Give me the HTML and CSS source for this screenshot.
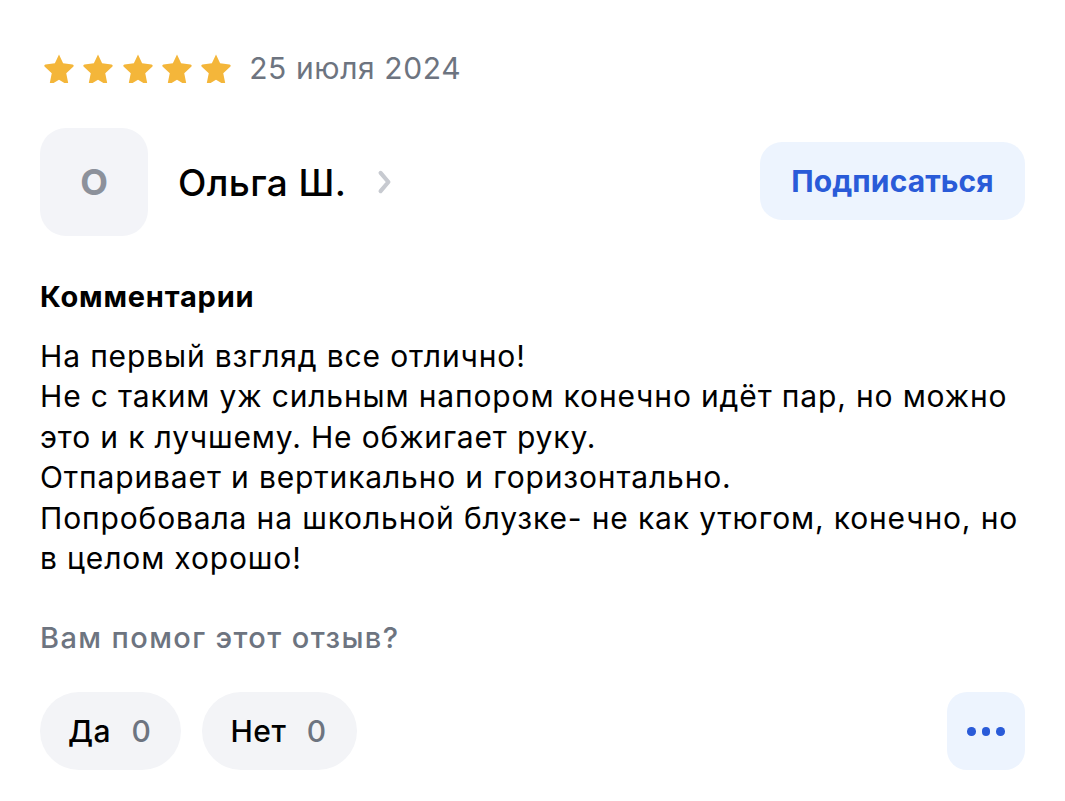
FILE: index.html
```
<!DOCTYPE html>
<html lang="ru">
<head>
    <meta charset="UTF-8">
    <meta name="viewport" content="width=device-width, initial-scale=1.0">
    <title>Отзыв</title>
    <link rel="stylesheet" href="styles.css">
</head>
<body>
    <div class="review">
        <div class="rating">
            <div class="stars">
                <svg class="star" viewBox="1.5 1.8 21 20.4"><path d="M12 2.2l2.9 6.1 6.6.8c.8.1 1.1 1.1.5 1.6l-4.9 4.6 1.3 6.6c.2.8-.7 1.4-1.4 1l-5-2.9-5 2.9c-.7.4-1.6-.2-1.4-1l1.3-6.6-4.9-4.6c-.6-.5-.3-1.5.5-1.6l6.6-.8z"/></svg>
                <svg class="star" viewBox="1.5 1.8 21 20.4"><path d="M12 2.2l2.9 6.1 6.6.8c.8.1 1.1 1.1.5 1.6l-4.9 4.6 1.3 6.6c.2.8-.7 1.4-1.4 1l-5-2.9-5 2.9c-.7.4-1.6-.2-1.4-1l1.3-6.6-4.9-4.6c-.6-.5-.3-1.5.5-1.6l6.6-.8z"/></svg>
                <svg class="star" viewBox="1.5 1.8 21 20.4"><path d="M12 2.2l2.9 6.1 6.6.8c.8.1 1.1 1.1.5 1.6l-4.9 4.6 1.3 6.6c.2.8-.7 1.4-1.4 1l-5-2.9-5 2.9c-.7.4-1.6-.2-1.4-1l1.3-6.6-4.9-4.6c-.6-.5-.3-1.5.5-1.6l6.6-.8z"/></svg>
                <svg class="star" viewBox="1.5 1.8 21 20.4"><path d="M12 2.2l2.9 6.1 6.6.8c.8.1 1.1 1.1.5 1.6l-4.9 4.6 1.3 6.6c.2.8-.7 1.4-1.4 1l-5-2.9-5 2.9c-.7.4-1.6-.2-1.4-1l1.3-6.6-4.9-4.6c-.6-.5-.3-1.5.5-1.6l6.6-.8z"/></svg>
                <svg class="star" viewBox="1.5 1.8 21 20.4"><path d="M12 2.2l2.9 6.1 6.6.8c.8.1 1.1 1.1.5 1.6l-4.9 4.6 1.3 6.6c.2.8-.7 1.4-1.4 1l-5-2.9-5 2.9c-.7.4-1.6-.2-1.4-1l1.3-6.6-4.9-4.6c-.6-.5-.3-1.5.5-1.6l6.6-.8z"/></svg>
            </div>
            <span class="date">25 июля 2024</span>
        </div>

        <div class="author">
            <div class="author-info">
                <div class="avatar">О</div>
                <span class="name">Ольга Ш.</span>
                <svg class="chevron" viewBox="0 0 12 20"><path d="M3 3l6 7-6 7"/></svg>
            </div>
            <button class="subscribe">Подписаться</button>
        </div>

        <h2 class="title">Комментарии</h2>
        <p class="text">На первый взгляд все отлично!<br>
            Не с таким уж сильным напором конечно идёт пар, но можно<br>
            это и к лучшему. Не обжигает руку.<br>
            Отпаривает и вертикально и горизонтально.<br>
            Попробовала на школьной блузке- не как утюгом, конечно, но<br>
            в целом хорошо!</p>

        <div class="question">Вам помог этот отзыв?</div>

        <div class="actions">
            <div class="votes">
                <button class="vote">Да <span class="count">0</span></button>
                <button class="vote">Нет <span class="count">0</span></button>
            </div>
            <button class="more">
                <span class="dot"></span><span class="dot"></span><span class="dot"></span>
            </button>
        </div>
    </div>
</body>
</html>
```
FILE: styles.css
```
body{
    margin: 0;
    padding: 0;
    background-color: #ffffff;
    font-family: "Inter", "Noto Sans", sans-serif;
    color: #000000;
}

.review{
    padding: 53px 40px 0 40px;
}

.rating{
    display: flex;
    align-items: center;
    height: 30px;
}
.stars{
    display: flex;
    gap: 9.3px;
    margin-left: 4px;
}
.star{
    width: 30px;
    height: 29px;
    fill: #f4b63a;
}
.date{
    margin-left: 18px;
    font-size: 30px;
    letter-spacing: 0.6px;
    color: #6d7480;
}

.author{
    margin-top: 45px;
    display: flex;
    align-items: center;
    justify-content: space-between;
}
.author-info{
    display: flex;
    align-items: center;
}
.avatar{
    width: 108px;
    height: 108px;
    border-radius: 26px;
    background-color: #f3f4f8;
    display: flex;
    justify-content: center;
    align-items: center;
    font-size: 36px;
    font-weight: 700;
    color: #8c919b;
}
.name{
    margin-left: 30px;
    font-size: 37px;
    font-weight: 500;
    letter-spacing: 0.4px;
}
.chevron{
    margin-left: 30px;
    width: 17px;
    height: 26px;
    fill: none;
    stroke: #c7cad0;
    stroke-width: 3.2;
    stroke-linecap: round;
    stroke-linejoin: round;
}
.subscribe{
    width: 265px;
    height: 78px;
    margin-top: -2px;
    border: none;
    border-radius: 22px;
    background-color: #edf4fe;
    color: #2a5bd8;
    font-family: inherit;
    font-size: 30px;
    font-weight: 700;
    letter-spacing: 0.1px;
}

.title{
    margin: 41px 0 0 0;
    font-size: 29px;
    line-height: 40px;
    font-weight: 700;
    letter-spacing: 0.8px;
}
.text{
    margin: 19px 0 0 0;
    font-size: 30px;
    line-height: 40.4px;
    letter-spacing: 0.85px;
    white-space: nowrap;
}

.question{
    margin-top: 40px;
    font-size: 29px;
    line-height: 40px;
    font-weight: 500;
    letter-spacing: 1.4px;
    color: #6d7480;
}

.actions{
    margin-top: 34px;
    display: flex;
    justify-content: space-between;
}
.votes{
    display: flex;
    gap: 21px;
}
.vote{
    height: 78px;
    padding: 0 30px 0 28px;
    border: none;
    border-radius: 39px;
    background-color: #f3f4f7;
    font-family: inherit;
    font-size: 30px;
    font-weight: 500;
    letter-spacing: 0.5px;
    color: #000000;
}
.count{
    margin-left: 12px;
    color: #6d7480;
}
.more{
    width: 78px;
    height: 78px;
    border: none;
    border-radius: 20px;
    background-color: #edf4fe;
    display: flex;
    justify-content: center;
    align-items: center;
    gap: 6px;
}
.dot{
    width: 8.5px;
    height: 8.5px;
    border-radius: 50%;
    background-color: #2a5bd8;
}
```
